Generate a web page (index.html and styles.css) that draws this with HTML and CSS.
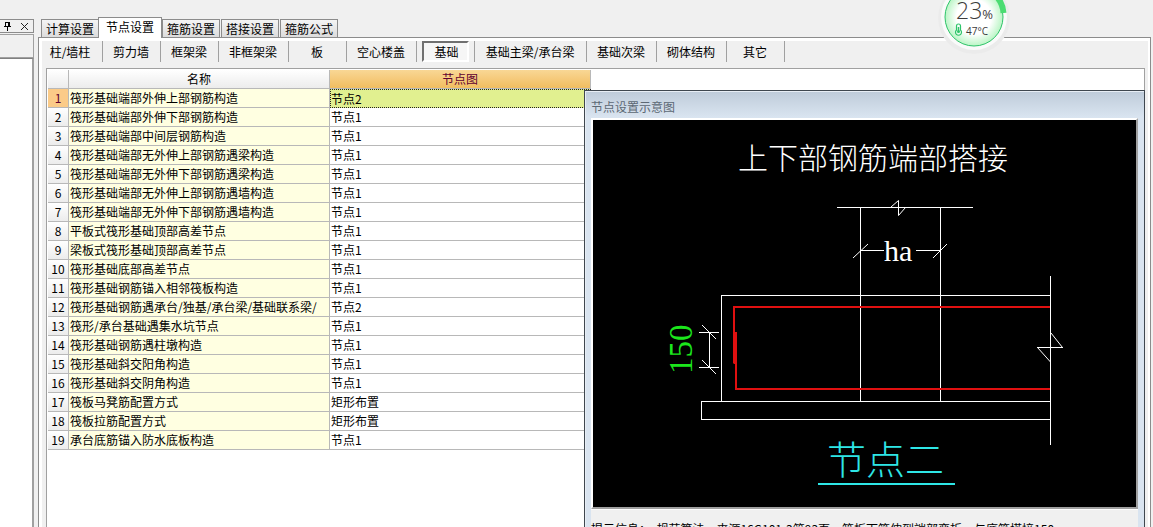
FILE: index.html
```html
<!DOCTYPE html>
<html lang="zh-CN">
<head>
<meta charset="utf-8">
<title>节点设置</title>
<link rel="stylesheet" href="styles.css">
</head>
<body>
<div class="app">
  <aside class="dock">
    <div class="dock-head">
      <button class="dock-btn" aria-label="固定"><svg width="9" height="10" viewBox="0 0 9 10"><path d="M1 5.5h7M2.5 1v5M2 1.5h4M5.5 1v5M6.5 1v5M4.5 6v4" fill="none" stroke="#000"/></svg></button>
      <button class="dock-btn" aria-label="关闭"><svg width="9" height="9" viewBox="0 0 9 9"><path d="M1 1l7 7M8 1l-7 7" fill="none" stroke="#222"/></svg></button>
    </div>
    <div class="dock-bar"></div>
    <div class="dock-body"></div>
  </aside>
  <main class="main">
    <nav class="tabs">
      <button class="tab">计算设置</button>
      <button class="tab tab-active">节点设置</button>
      <button class="tab">箍筋设置</button>
      <button class="tab">搭接设置</button>
      <button class="tab">箍筋公式</button>
    </nav>
    <section class="page">
      <div class="kinds">
        <button class="kind kind-first">柱/墙柱</button>
        <button class="kind">剪力墙</button>
        <button class="kind">框架梁</button>
        <button class="kind">非框架梁</button>
        <button class="kind">板</button>
        <button class="kind">空心楼盖</button>
        <button class="kind kind-active"><span class="pressed">基础</span></button>
        <button class="kind kind-wide">基础主梁/承台梁</button>
        <button class="kind">基础次梁</button>
        <button class="kind">砌体结构</button>
        <button class="kind">其它</button>
      </div>
      <div class="sheet">
        <table class="grid">
          <colgroup><col class="c-num"><col class="c-name"><col class="c-node"></colgroup>
          <thead><tr><th></th><th>名称</th><th class="th-active">节点图</th></tr></thead>
          <tbody>
            <tr class="current"><th>1</th><td>筏形基础端部外伸上部钢筋构造</td><td>节点2</td></tr>
            <tr><th>2</th><td>筏形基础端部外伸下部钢筋构造</td><td>节点1</td></tr>
            <tr><th>3</th><td>筏形基础端部中间层钢筋构造</td><td>节点1</td></tr>
            <tr><th>4</th><td>筏形基础端部无外伸上部钢筋遇梁构造</td><td>节点1</td></tr>
            <tr><th>5</th><td>筏形基础端部无外伸下部钢筋遇梁构造</td><td>节点1</td></tr>
            <tr><th>6</th><td>筏形基础端部无外伸上部钢筋遇墙构造</td><td>节点1</td></tr>
            <tr><th>7</th><td>筏形基础端部无外伸下部钢筋遇墙构造</td><td>节点1</td></tr>
            <tr><th>8</th><td>平板式筏形基础顶部高差节点</td><td>节点1</td></tr>
            <tr><th>9</th><td>梁板式筏形基础顶部高差节点</td><td>节点1</td></tr>
            <tr><th>10</th><td>筏形基础底部高差节点</td><td>节点1</td></tr>
            <tr><th>11</th><td>筏形基础钢筋锚入相邻筏板构造</td><td>节点1</td></tr>
            <tr><th>12</th><td>筏形基础钢筋遇承台/独基/承台梁/基础联系梁/</td><td>节点2</td></tr>
            <tr><th>13</th><td>筏形/承台基础遇集水坑节点</td><td>节点1</td></tr>
            <tr><th>14</th><td>筏形基础钢筋遇柱墩构造</td><td>节点1</td></tr>
            <tr><th>15</th><td>筏形基础斜交阳角构造</td><td>节点1</td></tr>
            <tr><th>16</th><td>筏形基础斜交阴角构造</td><td>节点1</td></tr>
            <tr><th>17</th><td>筏板马凳筋配置方式</td><td>矩形布置</td></tr>
            <tr><th>18</th><td>筏板拉筋配置方式</td><td>矩形布置</td></tr>
            <tr><th>19</th><td>承台底筋锚入防水底板构造</td><td>节点1</td></tr>
          </tbody>
        </table>
        <div class="window">
          <div class="window-title">节点设置示意图</div>
          <div class="window-body">
            <svg class="drawing" viewBox="593 120 543 387">
              <g fill="none" stroke="#fff" shape-rendering="crispEdges">
                <path d="M837 207.5h136M860.5 207v194M940.5 207v194M861 250.5h23M916 250.5h24"/>
                <path d="M1050 295.5H721.500V401M1050 401.500H701.500V419.500H1050M1050.500 276v169"/>
                <path d="M699 332.500h20M699 367.500h20M709.500 332v36M1037 347.500h26"/>
              </g>
              <g fill="none" stroke="#fff">
                <path d="M853 258l15-14M933 258l14-14M702 325l14 14M702 360l14 14"/>
                <path d="M891 207l7.500-6.500v15l7-8M1051 333l11.500 14.500M1037.500 347.500l13 14.500"/>
              </g>
              <g fill="none" stroke="#e01010" stroke-width="2">
                <path d="M1050 307H734v56M1050 389H736V332"/>
                <path d="M735 332v32" stroke-width="3"/>
              </g>
              <text class="cad" x="738" y="169" font-size="30" fill="#fff">上下部钢筋端部搭接</text>
              <text class="cad-latin" x="884" y="261" font-size="30" fill="#fff">ha</text>
              <text class="cad-latin" transform="translate(692 374) rotate(-90)" font-size="33" fill="#1ce61c">150</text>
              <text class="cad" x="827" y="474" font-size="39" fill="#2ee6e6">节点二</text>
              <path d="M818 484h137" stroke="#2ee6e6" stroke-width="2"/>
            </svg>
          </div>
          <p class="hint">提示信息：&nbsp; 规范算法，来源16G101-3第93页，筏板下筋伸到端部弯折，与底筋搭接150</p>
        </div>
      </div>
    </section>
  </main>
  <div class="gauge">
    <svg class="gauge-ring" viewBox="0 0 80 60" width="80" height="60">
      <defs><radialGradient id="glow"><stop offset=".6" stop-color="#fff"/><stop offset="1" stop-color="#b9f5c4"/></radialGradient></defs>
      <circle cx="40" cy="18" r="36" fill="#ebebeb"/>
      <circle cx="40" cy="17" r="33" fill="#fafafa"/>
      <circle cx="40" cy="17" r="29" fill="url(#glow)" stroke="#2fc46a"/>
      <path d="M63 -3Q69 4 69.500 13" fill="none" stroke="#4bdc72" stroke-width="6"/>
      <path d="M22.500 30v-4a2 2 0 0 1 4 0v4a3 3 0 1 1-4 0z" fill="none" stroke="#2fc46a" stroke-width="1.200"/>
      <path d="M24.500 27v4" stroke="#2fc46a" stroke-width="1.500"/><circle cx="24.500" cy="31.500" r="1.500" fill="#2fc46a"/>
    </svg>
    <div class="gauge-text">
      <div class="gauge-value">23<small>%</small></div>
      <div class="gauge-temp">47°C</div>
    </div>
  </div>
</div>
</body>
</html>
```
FILE: styles.css
```css
* { box-sizing: border-box; }
body {
  margin: 0;
  background: #f0f0f0;
  color: #000;
  font: 12px/16px "Noto Sans CJK SC", "Liberation Sans", sans-serif;
}
button {
  margin: 0;
  padding: 0;
  border: 0;
  background: none;
  color: inherit;
  font: inherit;
  white-space: nowrap;
}
.app {
  position: relative;
  display: flex;
  gap: 4px;
  height: 100vh;
  padding-right: 2px;
  overflow: hidden;
}

.dock {
  display: flex;
  flex-direction: column;
  flex: none;
  width: 34px;
  padding-top: 19px;
}
.dock-head {
  display: flex;
  align-items: center;
  justify-content: flex-end;
  gap: 8px;
  height: 14px;
  padding-right: 4px;
  border: 1px solid #8c8c8c;
  border-left: 0;
}
.dock-btn { display: flex; }
.dock-bar {
  height: 24px;
  margin-top: 1px;
  border: 1px solid #a0a0a0;
  border-left: 0;
}
.dock-body {
  flex: 1;
  background: #fff;
  border-top: 1px solid #808080;
  border-right: 2px solid #a0a0a0;
}

.main {
  display: flex;
  flex-direction: column;
  flex: 1;
  min-width: 0;
  padding-top: 17px;
}
.tabs {
  display: flex;
  align-items: flex-end;
  gap: 1px;
  padding-left: 3px;
}
.tab {
  width: 58px;
  height: 18px;
  border: 1px solid #8c8c8c;
  border-bottom: 0;
  background: linear-gradient(#f4f4f4, #dcdcdc);
}
.tab-active {
  z-index: 1;
  width: 64px;
  height: 21px;
  margin: 0 -1px -1px -2px;
  padding-bottom: 3px;
  background: #fff;
}
.page {
  display: flex;
  flex-direction: column;
  flex: 1;
  min-height: 0;
  padding: 3px 5px 0 7px;
  border: 1px solid #8c8c8c;
  border-bottom: 0;
  box-shadow: inset 3px 3px #fff, inset -2px 0 #fff;
}
.kinds {
  display: flex;
  height: 21px;
  margin: 0 0 6px -7px;
}
.kind {
  flex: none;
  min-width: 58px;
  padding: 0 11px 0 10px;
  border-right: 1px solid #a0a0a0;
}
.kind-first { width: 64px; }
.kind-wide { width: 112px; }
.kind-active { padding: 0 5px; }
.pressed {
  display: block;
  height: 21px;
  padding: 1px 0 0 2px;
  border: 2px solid #808080;
  border-color: #707070 #fff #fff #707070;
  background: #f6f6f6;
}

.sheet {
  position: relative;
  flex: 1;
  min-height: 0;
  padding: 1px 0 0 1px;
  border: 1px solid #a0a0a0;
  border-bottom: 0;
  background: #fff;
}
.grid {
  width: 543px;
  table-layout: fixed;
  border-collapse: separate;
  border-spacing: 0;
}
.c-num { width: 21px; }
.c-name, .c-node { width: 261px; }
.grid th, .grid td {
  height: 19px;
  padding: 0 1px;
  border-right: 1px solid #b8b8b8;
  border-bottom: 1px solid #b8b8b8;
  overflow: hidden;
  white-space: nowrap;
  font-weight: normal;
  text-align: left;
}
.grid th {
  background: linear-gradient(#fff, #ececec);
  text-align: center;
}
.grid td:nth-child(2) { background: #ffffe1; }
.grid .th-active {
  background: linear-gradient(#f9d795, #f1bd60);
  color: #600030;
}
.grid .current th:first-child { background: #fbcb88; color: #600030; }
.grid .current td:last-child {
  padding: 0;
  border: 1px dotted #222;
  background: #e1f090;
}

.window {
  position: absolute;
  top: 21px;
  right: -1px;
  left: 537px;
  padding: 0 6px;
  border: 1px solid #3f474f;
  background: linear-gradient(#becbd9, #d9e4f0 26px);
  box-shadow: inset 1px 1px #e8eef5;
}
.window-title {
  height: 27px;
  padding-top: 8px;
  color: #5c6874;
}
.window-body {
  border: 2px solid #a0a0a0;
  border-top-color: #fff;
  border-left-color: #fff;
  background: #000;
}
.drawing {
  display: block;
  width: 100%;
  height: auto;
}
.cad { font-family: "Noto Sans CJK SC", sans-serif; font-weight: 300; }
.cad-latin { font-family: "Liberation Serif", serif; }
.hint {
  height: 36px;
  margin: 0;
  padding-top: 11px;
  border-top: 1px solid #fff;
  background: #f0f0f0;
  overflow: hidden;
  white-space: nowrap;
}

.gauge {
  position: absolute;
  top: 0;
  right: 139px;
  width: 80px;
  height: 60px;
  color: #3c3c3c;
  font-family: "Open Sans", sans-serif;
}
.gauge-ring { display: block; }
.gauge-text {
  position: absolute;
  top: 0;
  left: 22px;
}
.gauge-value {
  font-size: 23px;
  font-weight: 300;
  line-height: 20px;
  white-space: nowrap;
}
.gauge-value small { font-size: 13px; font-weight: 400; line-height: 13px; }
.gauge-temp {
  padding: 4px 0 0 10px;
  font-size: 10px;
  line-height: 13px;
}
```
